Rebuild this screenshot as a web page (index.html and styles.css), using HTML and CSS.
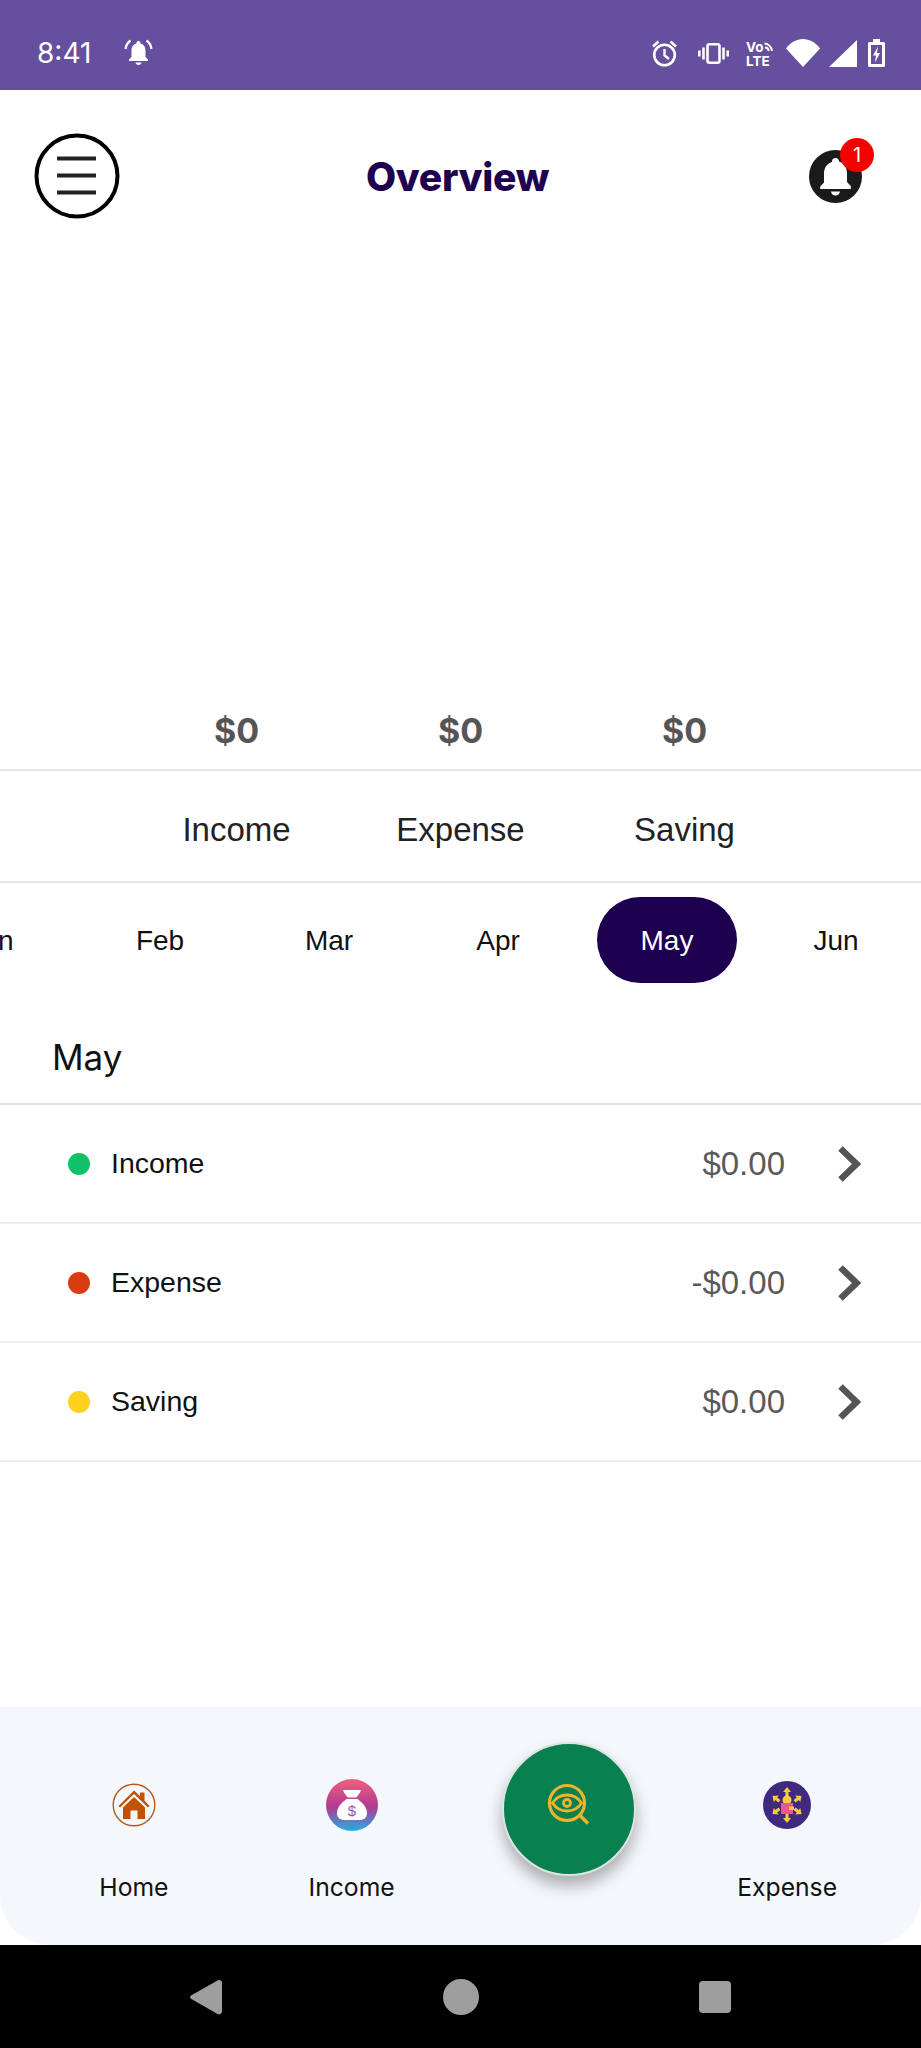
FILE: index.html
```
<!DOCTYPE html>
<html lang="en">
<head>
<meta charset="utf-8">
<title>Overview</title>
<link rel="stylesheet" href="styles.css">
</head>
<body>
<div class="phone">
  <div class="status">
    <span class="time">8:41</span>
    <svg class="st-bell" width="29" height="28" viewBox="0 0 29 28"><path d="M14.500 3c-1.200 0-2 .9-2 2v.6C8.800 6.600 7.500 9.700 7.500 13v6l-2.500 2.500V23h19v-1.500L21.500 19v-6c0-3.300-1.300-6.400-5-7.400V5c0-1.100-.8-2-2-2zM11.500 24.500c0 1.500 1.400 2.500 3 2.500s3-1 3-2.500z" fill="#fff"/><path d="M6.500 2.500C3.800 4.500 2 7.500 1.500 11M22.500 2.500c2.700 2 4.500 5 5 8.500" fill="none" stroke="#fff" stroke-width="2.200"/></svg>
    <div class="st-right">
      <svg class="gap-r21" width="25" height="27" viewBox="0 0 25 27"><circle cx="12.500" cy="15" r="10.300" fill="none" stroke="#fff" stroke-width="2.600"/><path d="M12.500 9v6.500l4.500 3.500" fill="none" stroke="#fff" stroke-width="2.400"/><path d="M1 6.500 6.500 1.500M24 6.500 18.500 1.500" stroke="#fff" stroke-width="2.400"/></svg>
      <svg class="gap-r15" width="31" height="21" viewBox="0 0 31 21"><rect x="9.500" y="1.300" width="12" height="18.400" rx="2" fill="none" stroke="#fff" stroke-width="2.600"/><path d="M5.500 4.500v12M25.500 4.500v12" stroke="#fff" stroke-width="2.600"/><path d="M1.300 7.500v6M29.700 7.500v6" stroke="#fff" stroke-width="2.600"/></svg>
      <svg class="gap-r8" width="34" height="32" viewBox="-2 -3 34 32"><text x="0" y="11.500" class="volte">Vo</text><text x="0" y="25.500" class="volte">LTE</text><path d="M18.500 3.500c3.500 0 7 3 7.500 7.500M19 7.500c2 0 3.500 1.500 3.800 3.500" fill="none" stroke="#fff" stroke-width="1.900"/></svg>
      <svg class="gap-r9" width="34" height="28" viewBox="0 0 34 28"><path d="M0 9.500C4.500 3.500 10.500 0 17 0s12.500 3.500 17 9.500L17 28z" fill="#fff"/></svg>
      <svg class="gap-r11" width="28" height="27" viewBox="0 0 28 27"><path d="M28 0v27H0z" fill="#fff"/></svg>
      <svg width="17" height="28" viewBox="0 0 17 28"><path d="M5 0h7v3h3.500a1.500 1.500 0 0 1 1.500 1.500v22a1.500 1.500 0 0 1-1.500 1.500h-14A1.500 1.500 0 0 1 0 26.500v-22A1.500 1.500 0 0 1 1.500 3H5z" fill="#fff"/><rect x="3" y="6" width="11" height="19" fill="#674fa0"/><path d="M10 7.500 5 16.500h3l-1 7 5-9.500H9z" fill="#fff"/></svg>
    </div>
  </div>

  <header class="topbar">
    <svg width="86" height="86" viewBox="0 0 86 86"><circle cx="43" cy="43" r="40.500" fill="#fff" stroke="#000" stroke-width="4"/><path d="M23 25.500h39M23 42.500h39M23 59.500h39" stroke="#222" stroke-width="4"/></svg>
    <h1 class="title">Overview</h1>
    <div class="bell">
      <svg width="53" height="53" viewBox="0 0 53 53"><circle cx="26.500" cy="26.500" r="26.500" fill="#1a1a1a"/><path d="M26.500 8c-2.200 0-3.500 1.500-3.500 3.500v.6c-5.500 1.500-8 6.400-8 11.900v8.500l-3.800 4V39h30.600v-3l-3.800-4v-8.500c0-5.500-2.500-10.400-8-11.900v-.6C30 9.500 28.700 8 26.500 8zM22 41.500c.3 2.500 2.200 4 4.500 4s4.200-1.500 4.500-4z" fill="#fff"/></svg>
      <span class="badge">1</span>
    </div>
  </header>

  <div class="chart"></div>

  <div class="cols amounts">
    <span>$0</span><span>$0</span><span>$0</span>
  </div>
  <div class="cols labels">
    <span>Income</span><span>Expense</span><span>Saving</span>
  </div>

  <div class="months">
    <span class="month">Jan</span>
    <span class="month">Feb</span>
    <span class="month">Mar</span>
    <span class="month">Apr</span>
    <span class="month active">May</span>
    <span class="month">Jun</span>
  </div>

  <h2 class="heading">May</h2>

  <ul class="rows">
    <li class="row">
      <span class="dot dot-green"></span><span class="row-name">Income</span><span class="row-val">$0.00</span>
      <svg class="chev" width="24" height="36" viewBox="0 0 24 36"><path d="M3.500 2.500 19.500 18 3.500 33.500" fill="none" stroke="#555" stroke-width="6.500"/></svg>
    </li>
    <li class="row">
      <span class="dot dot-red"></span><span class="row-name">Expense</span><span class="row-val">-$0.00</span>
      <svg class="chev" width="24" height="36" viewBox="0 0 24 36"><path d="M3.500 2.500 19.500 18 3.500 33.500" fill="none" stroke="#555" stroke-width="6.500"/></svg>
    </li>
    <li class="row">
      <span class="dot dot-yellow"></span><span class="row-name">Saving</span><span class="row-val">$0.00</span>
      <svg class="chev" width="24" height="36" viewBox="0 0 24 36"><path d="M3.500 2.500 19.500 18 3.500 33.500" fill="none" stroke="#555" stroke-width="6.500"/></svg>
    </li>
  </ul>

  <div class="spacer"></div>

  <nav class="tabbar">
    <div class="tab">
      <div class="tab-icon">
        <svg width="44" height="44" viewBox="0 0 44 44"><circle cx="22" cy="22" r="20.800" fill="none" stroke="#b8581a" stroke-width="1.400"/><path d="M6.500 23 22 7.500l6 5.500V9.500h4.500v8L37.500 23 36 24.500 22 11 8 24.500z" fill="#bf5300"/><path d="M11 24.500 22 14l11 10.500V36H25.500v-8.500h-7V36H11z" fill="#bf5300"/></svg>
      </div>
      <span class="tab-label">Home</span>
    </div>
    <div class="tab">
      <div class="tab-icon">
        <svg width="52" height="52" viewBox="0 0 52 52"><defs><linearGradient id="incomeGrad" x1="0" y1="0" x2="0" y2="1"><stop offset="0" stop-color="#ef5f78"/><stop offset=".55" stop-color="#b03a94"/><stop offset="1" stop-color="#22b0e4"/></linearGradient></defs><circle cx="26" cy="26" r="26" fill="url(#incomeGrad)"/><path d="M17 11h18l-1 2.500-3.500 5h-9L18 13.500z" fill="#fff"/><path d="M20.500 20h11c5 3.500 9.500 8.500 9.500 14 0 5-3.500 7-7 7H18c-3.500 0-7-2-7-7 0-5.500 4.500-10.500 9.500-14z" fill="#fff"/><text x="26" y="37" class="bag-dollar">$</text></svg>
      </div>
      <span class="tab-label">Income</span>
    </div>
    <div class="fab">
      <svg width="46" height="46" viewBox="0 0 46 46"><circle cx="20" cy="20" r="17.500" fill="none" stroke="#f1b32a" stroke-width="3.200"/><path d="M5.500 20C9 14.500 14 12 20 12s11 2.500 14.500 8C31 25.500 26 28 20 28S9 25.500 5.500 20z" fill="none" stroke="#f1b32a" stroke-width="2.800"/><circle cx="20" cy="20" r="3.500" fill="none" stroke="#f1b32a" stroke-width="2.800"/><path d="M32.500 32 41 40.500" stroke="#f1b32a" stroke-width="3.400"/></svg>
    </div>
    <div class="tab">
      <div class="tab-icon">
        <svg width="48" height="48" viewBox="0 0 48 48"><circle cx="24" cy="24" r="24" fill="#3f2a80"/><g fill="#f9c93e"><path d="M24 6l4 5h-2.500v4h-3v-4H20z"/><path d="M24 42l4-5h-2.500v-4h-3v4H20z"/><path d="M9.500 15l6.300-.4-1.600 2 3.200 2.500-1.900 2.300-3.200-2.500-1.600 2z"/><path d="M38.500 15l-6.300-.4 1.600 2-3.200 2.500 1.900 2.300 3.200-2.500 1.600 2z"/><path d="M9.500 33l6.300.4-1.600-2 3.200-2.500-1.900-2.300-3.200 2.500-1.600-2z"/><path d="M38.500 33l-6.300.4 1.600-2-3.200-2.500 1.900-2.300 3.200 2.500 1.600-2z"/><circle cx="24" cy="19" r="4.500"/></g><rect x="18" y="22" width="12" height="11" fill="#ee5596"/><rect x="26" y="25.500" width="5" height="3.500" fill="#f9c93e"/></svg>
      </div>
      <span class="tab-label">Expense</span>
    </div>
  </nav>

  <div class="sysnav">
    <svg width="33" height="36" viewBox="0 0 33 36"><path d="M28.500 1.500 2 16.500a2 2 0 0 0 0 3.300L28.500 35a3 3 0 0 0 4.500-2.500v-29A3 3 0 0 0 28.500 1.500z" fill="#9e9e9e"/></svg>
    <span class="sys-circle"></span>
    <span class="sys-square"></span>
  </div>
</div>
</body>
</html>
```
FILE: styles.css
```
* { box-sizing: border-box; }
html, body { margin: 0; padding: 0; background: #fff; }
body { width: 921px; height: 2048px; overflow: hidden; font-family: "Liberation Sans", sans-serif; }
.phone { width: 921px; height: 2048px; display: flex; flex-direction: column; overflow: hidden; }

.status { height: 90px; flex: none; background: #674fa0; color: #fff; display: flex; align-items: center; padding: 16px 36px 0 37px; }
.time { font-family: "Inter", sans-serif; font-size: 28px; font-weight: 400; width: 87px; line-height: 28px; }
.st-bell { display: block; margin-top: -2px; }
.st-right { margin-left: auto; display: flex; align-items: center; }
.gap-r21 { margin-right: 21px; }
.gap-r15 { margin-right: 15px; }
.gap-r8 { margin-right: 8px; }
.gap-r9 { margin-right: 9px; }
.gap-r11 { margin-right: 11px; }
.volte { font-family: "Inter", sans-serif; font-weight: 700; font-size: 13.500px; fill: #fff; }

.topbar { height: 172px; flex: none; display: flex; align-items: center; justify-content: space-between; padding: 0 59px 0 34px; position: relative; }
.title { margin: 0; font-family: "Inter", sans-serif; font-weight: 800; font-size: 39px; letter-spacing: -.3px; color: #1e0050; position: absolute; left: 0; right: 6px; text-align: center; pointer-events: none; }
.bell { position: relative; width: 53px; height: 53px; }
.bell svg { display: block; }
.badge { position: absolute; left: 31px; top: -12px; width: 34px; height: 34px; border-radius: 50%; background: #f40000; color: #fff; font-family: "Inter", sans-serif; font-size: 20px; line-height: 34px; text-align: center; }

.chart { height: 438px; flex: none; }

.cols { display: grid; grid-template-columns: repeat(3, 224px); justify-content: center; flex: none; border-bottom: 2px solid #e4e4e4; text-align: center; }
.cols span { display: block; }
.amounts { height: 71px; padding-top: 12px; font-family: "Inter", sans-serif; font-weight: 700; font-size: 34px; line-height: 38px; color: #555; }
.labels { height: 112px; padding-top: 40px; font-size: 33px; line-height: 38px; color: #222; }

.months { display: flex; flex: none; gap: 29px; margin-left: -79px; padding-top: 14px; height: 100px; }
.month { flex: none; width: 140px; height: 86px; border-radius: 43px; display: flex; align-items: center; justify-content: center; padding-top: 2px; font-size: 28px; color: #111; }
.month.active { background: #1e0050; color: #fff; }

.heading { margin: 0; flex: none; height: 122px; padding: 54px 0 0 52px; font-family: "Inter", sans-serif; font-weight: 400; font-size: 35px; line-height: 40px; color: #111; border-bottom: 2px solid #e4e4e4; }

.rows { list-style: none; margin: 0; padding: 0; flex: none; }
.row { height: 119px; display: flex; align-items: center; padding: 0 60px 0 68px; border-bottom: 2px solid #ededed; }
.dot { width: 22px; height: 22px; border-radius: 50%; flex: none; }
.dot-green { background: #0fc168; }
.dot-red { background: #dc3a10; }
.dot-yellow { background: #ffd220; }
.row-name { margin-left: 21px; font-size: 28.500px; color: #111; }
.row-val { margin-left: auto; font-size: 33px; color: #5a5a5a; }
.chev { margin-left: 52px; flex: none; display: block; }

.spacer { flex: 1; }

.tabbar { height: 238px; flex: none; background: #f4f7fc; border-radius: 0 0 50px 50px; display: grid; grid-template-columns: repeat(4, 1fr); padding: 0 25px; position: relative; }
.tab { display: flex; flex-direction: column; align-items: center; padding-top: 72px; }
.tab-icon { height: 52px; display: flex; align-items: center; justify-content: center; }
.tab-icon svg { display: block; }
.tab-label { margin-top: 41px; font-family: "Inter", sans-serif; font-size: 24.700px; line-height: 30px; color: #111; }
.fab { justify-self: center; margin-top: 35px; width: 134px; height: 134px; border-radius: 50%; background: #08804f; border: 2px solid #dbe6e0; box-shadow: 0 10px 16px rgba(0,0,0,.3); display: flex; align-items: center; justify-content: center; }
.fab svg { display: block; margin: -6px 0 0 2px; }
.bag-dollar { font-family: "Liberation Sans", sans-serif; font-size: 15px; fill: #9a4fb0; text-anchor: middle; }

.sysnav { height: 103px; flex: none; background: #000; position: relative; display: grid; grid-template-columns: 33px 36px 32px; justify-content: space-between; align-items: start; padding: 34px 190px 0 189px; }
.sysnav svg { display: block; }
.sys-circle { width: 36px; height: 36px; border-radius: 50%; background: #9e9e9e; }
.sys-square { width: 32px; height: 32px; border-radius: 4px; background: #9e9e9e; margin-top: 2px; }
```
